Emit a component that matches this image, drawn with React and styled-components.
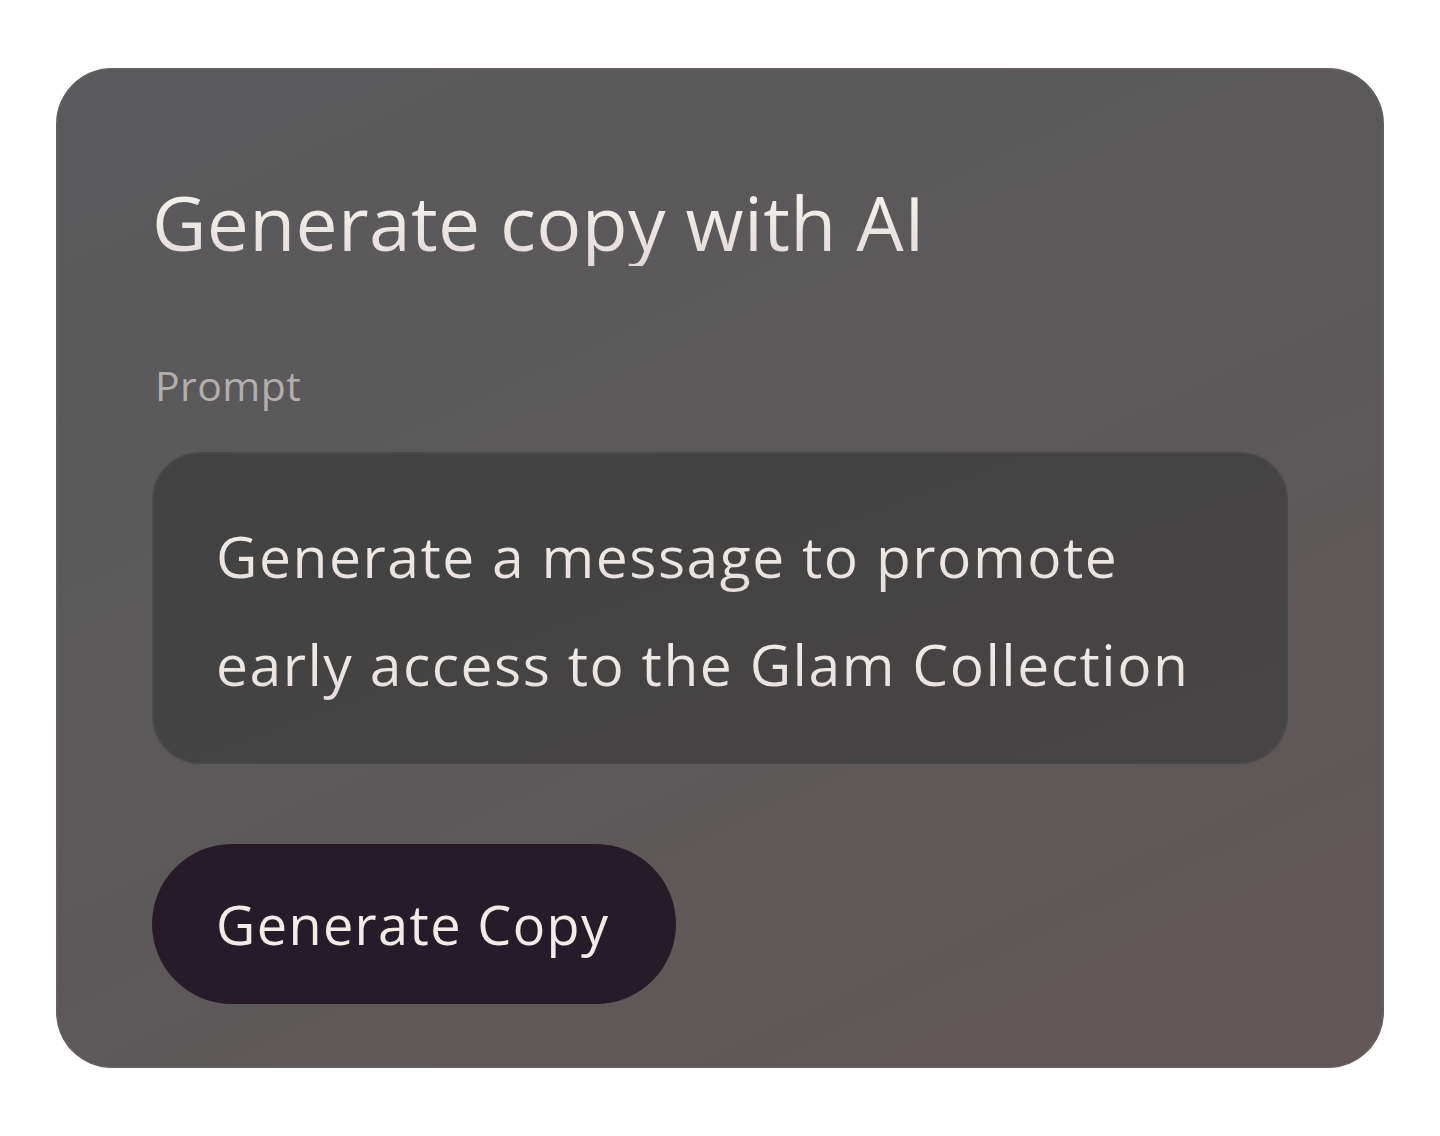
import React from "react";
import styled, { createGlobalStyle } from "styled-components";

const GlobalStyle = createGlobalStyle`
  html, body {
    margin: 0;
    padding: 0;
    background: #ffffff;
  }
  body {
    font-family: "Open Sans", "Liberation Sans", sans-serif;
  }
`;

const Page = styled.div`
  width: 1440px;
  height: 1136px;
  padding: 68px 56px;
  box-sizing: border-box;
`;

const Card = styled.section`
  box-sizing: border-box;
  height: 1000px;
  border-radius: 56px;
  border: 2px solid rgba(255, 255, 255, 0.04);
  background: linear-gradient(155deg, #5a595b 0%, #5b595a 45%, #625756 100%);
  padding: 108px 94px 62px;
  display: flex;
  flex-direction: column;
`;

const Title = styled.h1`
  margin: 0;
  font-size: 75px;
  font-weight: 500;
  line-height: 88px;
  letter-spacing: 0.3px;
  background: linear-gradient(180deg, #f2efea 30%, #e3d8d8 100%);
  -webkit-background-clip: text;
  background-clip: text;
  color: transparent;
`;

const Label = styled.label`
  margin-top: 92px;
  padding-left: 3px;
  font-size: 41px;
  line-height: 54px;
  letter-spacing: 0.4px;
  color: #b2aeae;
`;

const PromptBox = styled.div`
  margin-top: 40px;
  border-radius: 48px;
  border: 2px solid rgba(255, 255, 255, 0.035);
  background: linear-gradient(160deg, #424243 0%, #474445 100%);
  padding: 48px 62px 44px;
  font-size: 57px;
  line-height: 108px;
  letter-spacing: 1.5px;
  color: #ebe5e2;
`;

const Line = styled.span`
  display: block;
  white-space: nowrap;
  background: linear-gradient(180deg, #f0ece7 30%, #e4d9d9 100%);
  -webkit-background-clip: text;
  background-clip: text;
  color: transparent;
`;

const Actions = styled.div`
  margin-top: 80px;
  display: flex;
`;

const Button = styled.button`
  height: 160px;
  padding: 0 67px 0 64px;
  border: none;
  border-radius: 80px;
  background: #261b28;
  color: #f1ece6;
  font-family: inherit;
  font-size: 54px;
  letter-spacing: 1.4px;
  cursor: pointer;
`;

export default function App() {
  return (
    <>
      <GlobalStyle />
      <Page>
        <Card>
          <Title>Generate copy with AI</Title>
          <Label>Prompt</Label>
          <PromptBox>
            <Line>Generate a message to promote</Line>
            <Line>early access to the Glam Collection</Line>
          </PromptBox>
          <Actions>
            <Button>Generate Copy</Button>
          </Actions>
        </Card>
      </Page>
    </>
  );
}
